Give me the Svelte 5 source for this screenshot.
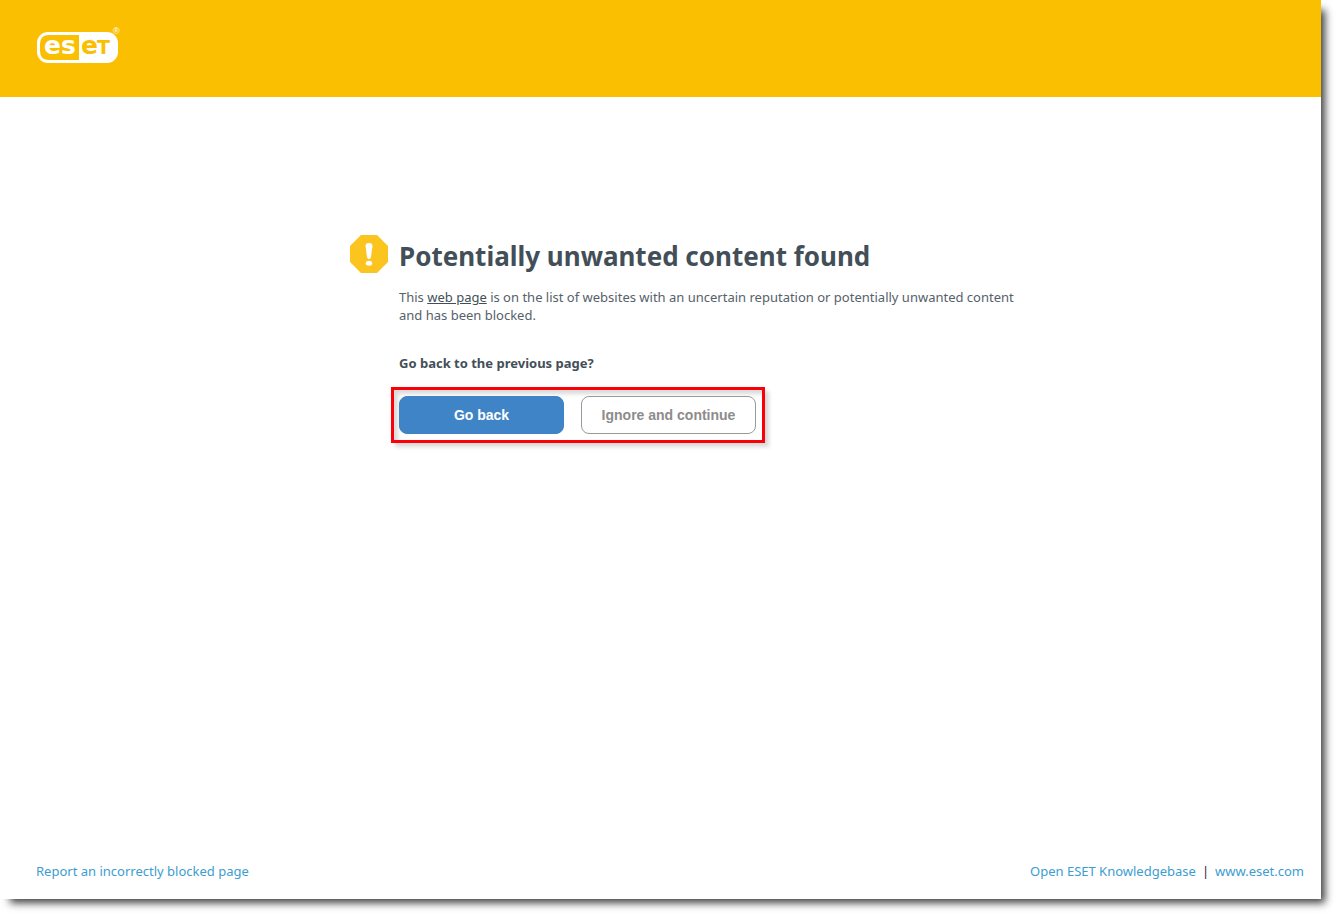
<script>
	const helpLinks = [
		{ label: 'Open ESET Knowledgebase', href: '#knowledgebase' },
		{ label: 'www.eset.com', href: '#home' },
	];

	const goBack = () => history.back();

	let ignored = $state(false);
</script>

<style>
	:global(body) {
		background: white;
	}

	.page {
		display: flex;
		flex-direction: column;
		box-sizing: border-box;
		min-height: calc(100vh - 15px);
		margin: 0 15px 15px 0;
		background: white;
		box-shadow: 7px 7px 8px -3px rgba(0, 0, 0, 0.75);
		color: #434f58;
		font: 13px/18px "Noto Sans", "Open Sans", sans-serif;
	}

	header {
		padding: 26px 36px 30px;
		background: #fbbf02;
	}

	.logo {
		display: block;
		width: 86px;
		height: 41px;
	}

	.logo-text {
		font-family: "DejaVu Sans", sans-serif;
		font-weight: bold;
	}

	main {
		flex: 1;
		display: flex;
		gap: 11px;
		box-sizing: border-box;
		width: 100%;
		max-width: 723px;
		margin: 0 auto;
		padding: 138px 0 40px 51px;
	}

	.warning {
		flex: none;
		width: 38px;
		height: 38px;
	}

	h1 {
		margin: 3px 0 14px;
		font-size: 26px;
		line-height: 36px;
	}

	p {
		margin: 0 0 30px;
	}

	.message {
		color: #56616a;
	}

	.message a {
		color: #434f58;
	}

	.question {
		margin-bottom: 15px;
		font-weight: bold;
	}

	/* Highlighted choice */

	.actions {
		display: flex;
		gap: 17px;
		width: max-content;
		margin-left: -8px;
		padding: 6px;
		padding-left: 5px;
		border: 3px solid #fb0007;
		box-shadow: 4px 4px 4px rgba(0, 0, 0, 0.15), inset 4px 4px 4px rgba(0, 0, 0, 0.15);
	}

	button {
		width: 165px;
		height: 38px;
		padding: 0;
		border: 1px solid #3e84c6;
		border-radius: 8px;
		background: #3e84c6;
		color: white;
		font: bold 14px "Liberation Sans", Arial, sans-serif;
		cursor: pointer;
	}

	.secondary {
		width: 175px;
		border-color: #999;
		background: white;
		color: #8c8c8c;
	}

	footer {
		display: flex;
		justify-content: space-between;
		padding: 0 17px 19px 36px;
	}

	footer a {
		color: #3c9dd0;
		text-decoration: none;
	}

	nav {
		display: flex;
		gap: 6px;
	}

	.separator {
		color: #2d2440;
	}
</style>

<div class="page">
	<header>
		<svg class="logo" viewBox="0 0 86 41" role="img" aria-label="ESET">
			<rect x="1" y="6" width="81" height="31" rx="11" fill="white" />
			<path d="M43 9H13Q4 9 4 18V25Q4 34 13 34H43Z" fill="#fbbf02" />
			<g class="logo-text">
				<text x="8" y="28" font-size="25" fill="white">es</text>
				<text x="45" y="28" font-size="25" fill="#fbbf02">e</text>
				<text x="61" y="28" font-size="19" fill="#fbbf02">T</text>
			</g>
			<text x="77" y="8" font-size="9" fill="white" font-family="Liberation Sans">®</text>
		</svg>
	</header>

	<main>
		<svg class="warning" viewBox="0 0 38 38" aria-hidden="true">
			<path d="M11 0H27L38 11V27L27 38H11L0 27V11Z" fill="#fcc41f" />
			<path d="M15.5 11Q15.5 8 19 8T22.5 11L21 22Q20.7 24 19 24T17 22Z" fill="white" />
			<ellipse cx="19" cy="28.3" rx="3.2" ry="2.5" fill="white" />
		</svg>

		<div class="content">
			<h1>Potentially unwanted content found</h1>
			<p class="message">
				This <a href="#page">web page</a> is on the list of websites with an uncertain reputation or potentially unwanted content and has been blocked.
			</p>
			<p class="question">Go back to the previous page?</p>

			<div class="actions">
				<button type="button" onclick={goBack}>Go back</button>
				<button type="button" class="secondary" disabled={ignored} onclick={() => (ignored = true)}>Ignore and continue</button>
			</div>
		</div>
	</main>

	<footer>
		<a href="#report">Report an incorrectly blocked page</a>
		<nav>
			{#each helpLinks as link, i}
				{#if i > 0}<span class="separator">|</span>{/if}
				<a href={link.href}>{link.label}</a>
			{/each}
		</nav>
	</footer>
</div>
